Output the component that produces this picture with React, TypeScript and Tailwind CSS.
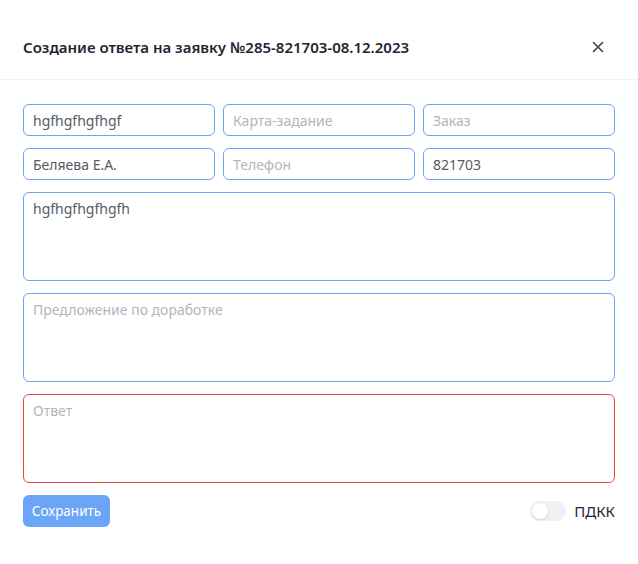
import { useState } from "react";

export default function App() {
  const [pdkk, setPdkk] = useState(false);

  const inputCls =
    "h-8 w-full rounded-md border border-[#6ea2f6] bg-white px-[9px] text-[14px] text-[#555b64] placeholder-[#b1b6be] outline-none";
  const areaCls =
    "h-[89px] w-full resize-none rounded-md border bg-white px-[9px] py-[6px] text-[14px] leading-[20px] text-[#555b64] placeholder-[#b1b6be] outline-none";

  return (
    <div className="h-[564px] w-[638px] bg-white font-['Noto_Sans','Open_Sans',sans-serif]">
      {/* Header */}
      <div className="flex h-[80px] items-start justify-between border-b border-[#eef0f3] pl-[23px] pr-[32px] pt-[35px]">
        <h2 className="text-[15px] font-semibold leading-[24px] text-[#1f2633]">
          Создание ответа на заявку №285-821703-08.12.2023
        </h2>
        <button type="button" className="mt-[4px] text-[#3a4250]">
          <svg width="16" height="16" viewBox="0 0 16 16" fill="none">
            <path
              d="M3.5 3.5l9 9M12.5 3.5l-9 9"
              stroke="currentColor"
              strokeWidth="1.6"
              strokeLinecap="round"
            />
          </svg>
        </button>
      </div>

      {/* Body */}
      <div className="flex flex-col gap-3 px-[23px] pt-[24px]">
        <div className="grid grid-cols-3 gap-2">
          <input className={inputCls} defaultValue="hgfhgfhgfhgf" />
          <input className={inputCls} placeholder="Карта-задание" />
          <input className={inputCls} placeholder="Заказ" />
        </div>
        <div className="grid grid-cols-3 gap-2">
          <input className={inputCls} defaultValue="Беляева Е.А." />
          <input className={inputCls} placeholder="Телефон" />
          <input className={inputCls} defaultValue="821703" />
        </div>
        <textarea
          className={`${areaCls} border-[#6ea2f6]`}
          defaultValue="hgfhgfhgfhgfh"
        />
        <textarea
          className={`${areaCls} border-[#6ea2f6]`}
          placeholder="Предложение по доработке"
        />
        <textarea className={`${areaCls} border-[#ef4444]`} placeholder="Ответ" />

        <div className="flex items-center justify-between">
          <button
            type="button"
            className="flex h-8 w-[87px] items-center justify-center rounded-md bg-[#6ba5f8] text-[13.5px] text-white"
          >
            Сохранить
          </button>
          <label className="flex cursor-pointer items-center gap-2">
            <button
              type="button"
              onClick={() => setPdkk(!pdkk)}
              className={`flex h-5 w-9 items-center rounded-full p-[2px] ${
                pdkk ? "bg-[#6ba5f8]" : "bg-[#eef0f3]"
              }`}
            >
              <span
                className={`h-4 w-4 rounded-full bg-white shadow ${
                  pdkk ? "translate-x-4" : ""
                }`}
              />
            </button>
            <span className="text-[15px] text-[#1f2633]">ПДКК</span>
          </label>
        </div>
      </div>
    </div>
  );
}
